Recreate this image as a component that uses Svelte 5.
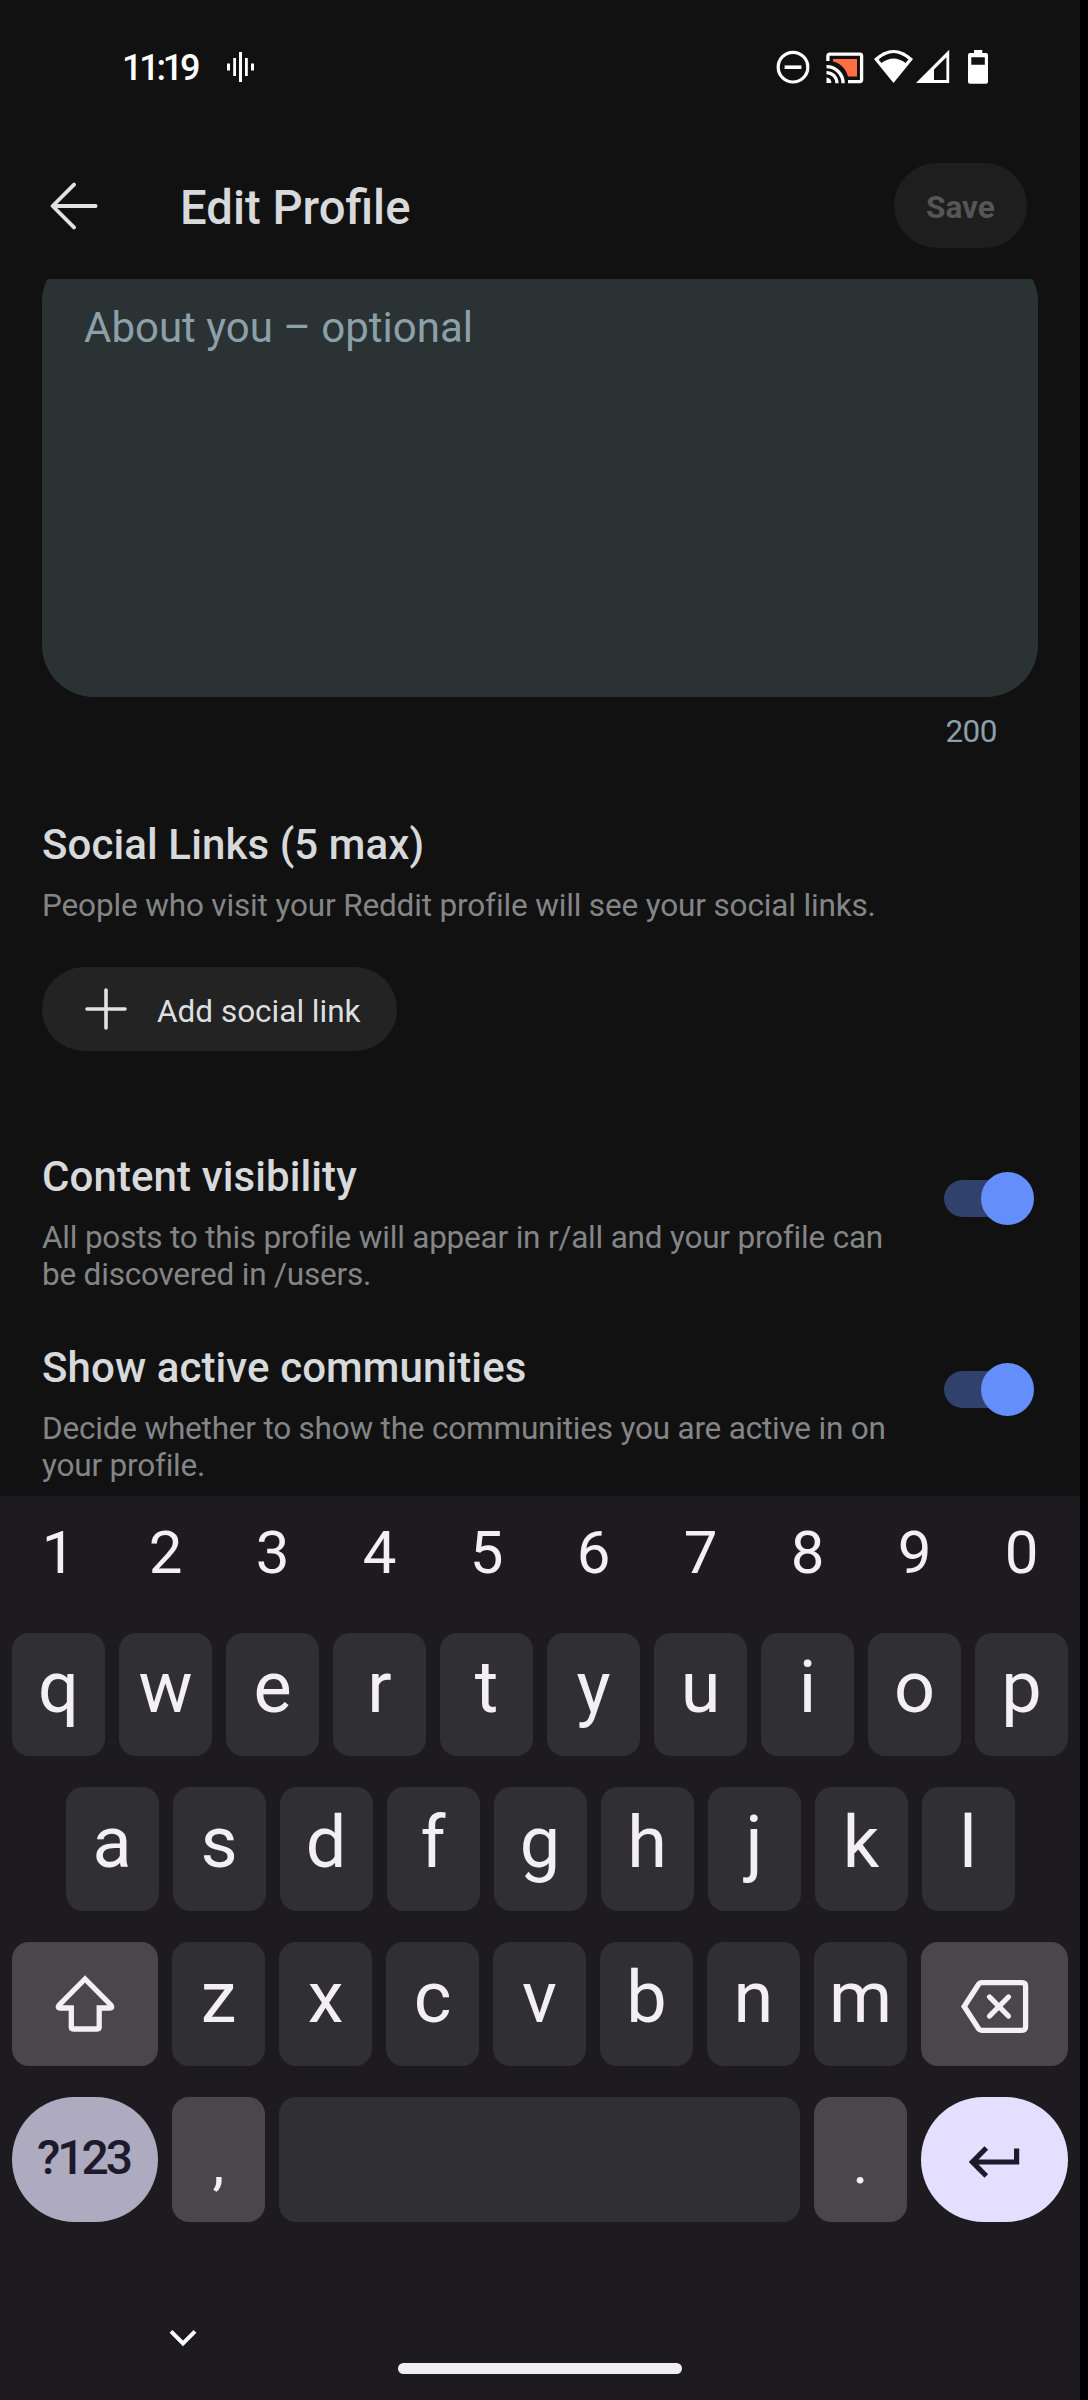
<script>
  let about = $state('');
  let settings = $state([
    {
      title: 'Content visibility',
      text: 'All posts to this profile will appear in r/all and your profile can be discovered in /users.',
      on: true
    },
    {
      title: 'Show active communities',
      text: 'Decide whether to show the communities you are active in on your profile.',
      on: true
    }
  ]);
  const digits = [...'1234567890'];
  const top = [...'qwertyuiop'];
  const home = [...'asdfghjkl'];
  const low = [...'zxcvbnm'];
</script>

<div class="phone">
  <div class="status">
    <span class="clock">11:19</span>
    <svg class="wave" width="30" height="32" viewBox="0 0 30 32" fill="#fff">
      <rect x="1" y="12.5" width="3" height="7" /><rect x="7.2" y="7" width="2.8" height="18" />
      <rect x="13" y="1" width="3" height="30" /><rect x="19" y="7" width="2.8" height="18" />
      <rect x="25" y="12.5" width="3" height="7" />
    </svg>
    <div class="indicators">
      <svg class="dnd" width="34" height="36" viewBox="0 0 34 36" fill="none" stroke="#fff">
        <circle cx="17" cy="18.2" r="14.8" stroke-width="3.2" />
        <path d="M8.6 18.2H25.4" stroke-width="3.6" />
      </svg>
      <svg class="cast" width="38" height="36" viewBox="0 0 38 36" fill="none" stroke="#fff" stroke-width="3.3">
        <path d="M7 10H31V27.6H22C20.5 20.5 14.5 13.6 7 12.4Z" fill="#ff6f43" stroke="none" />
        <path d="M1.9 12V7Q1.9 5.2 3.7 5.2H33.8Q35.6 5.2 35.6 7V30.8Q35.6 32.6 33.8 32.6H22" />
        <path d="M.5 17.6A16.6 16.6 0 0 1 17.1 34.2M.5 23.6A10.4 10.4 0 0 1 10.9 34.2" />
        <path d="M.5 28.6A5 5 0 0 1 5.3 34H.5Z" fill="#fff" stroke="none" />
      </svg>
      <svg class="wifi" width="39" height="36" viewBox="0 0 39 36">
        <path d="M0 10Q19.5 -8 39 10L19.5 34Z" fill="#fff" />
        <path d="M4.6 10.6Q19.5 -2.6 34.4 10.6L31.6 14Q19.5 4.8 7.4 14Z" fill="#111" />
      </svg>
      <svg class="signal" width="34" height="36" viewBox="0 0 34 36">
        <path fill="#fff" fill-rule="evenodd" d="M0 34L33.2 .8V34ZM18 31H30.4V8.2L18 20.6Z" />
      </svg>
      <svg class="battery" width="20" height="36" viewBox="0 0 20 36">
        <path fill="#fff" fill-rule="evenodd" d="M6 1H14.3V4H18Q20 4 20 6V32.7Q20 34.7 18 34.7H2Q0 34.7 0 32.7V6Q0 4 2 4H6ZM3.3 8.2V15.8H16.8V8.2Z" />
      </svg>
    </div>
  </div>

  <header class="bar">
    <svg class="back" width="50" height="48" viewBox="0 0 50 48" fill="none" stroke="#dfe3e5" stroke-width="3.8" stroke-linecap="round" stroke-linejoin="round">
      <path d="M46.6 24H4M25 2.6L3.6 24L25 45.4" />
    </svg>
    <h1>Edit Profile</h1>
    <button class="save" disabled>Save</button>
  </header>

  <main>
    <div class="about">{about || 'About you – optional'}</div>
    <div class="count">{200 - about.length}</div>

    <h2>Social Links (5 max)</h2>
    <p class="hint">People who visit your Reddit profile will see your social links.</p>
    <button class="add">
      <svg width="42" height="42" viewBox="0 0 42 42" stroke="#dfe3e5" stroke-width="3.6" stroke-linecap="round">
        <path d="M21 2V40M2 21H40" />
      </svg>
      <span>Add social link</span>
    </button>

    <div class="settings">
      {#each settings as s}
        <section class="setting">
          <div class="copy">
            <h2>{s.title}</h2>
            <p>{s.text}</p>
          </div>
          <button class="switch" class:on={s.on} aria-label={s.title} onclick={() => (s.on = !s.on)}>
            <span class="thumb"></span>
          </button>
        </section>
      {/each}
    </div>
  </main>

  <div class="keyboard">
    <div class="row digits">
      {#each digits as d}<span class="digit">{d}</span>{/each}
    </div>
    <div class="row first">
      {#each top as k}<span class="key">{k}</span>{/each}
    </div>
    <div class="row">
      {#each home as k}<span class="key">{k}</span>{/each}
    </div>
    <div class="row">
      <span class="key wide tone">
        <svg width="60" height="58" viewBox="0 0 60 58" fill="none" stroke="#f3eff5" stroke-width="5.3">
          <path d="M30 4L4 30.2Q2 33 5 33H16.3V52Q16.3 54 18.3 54H42.2Q44.2 54 44.2 52V33H55Q58 33 56 30.2Z" />
        </svg>
      </span>
      {#each low as k}<span class="key">{k}</span>{/each}
      <span class="key wide tone end">
        <svg class="erase" width="68" height="53" viewBox="0 0 68 53" fill="none" stroke="#f3eff5" stroke-width="5.3">
          <path d="M3.2 26.5L17.6 4.2Q18.6 2.7 20.5 2.7H61Q64.6 2.7 64.6 6.2V46.8Q64.6 50.3 61 50.3H20.5Q18.6 50.3 17.6 48.8Z" />
          <path d="M28.6 17L47.4 36M47.4 17L28.6 36" stroke-linecap="round" />
        </svg>
      </span>
    </div>
    <div class="row last">
      <span class="key wide symbols">?123</span>
      <span class="key tone mark">,</span>
      <span class="key space"></span>
      <span class="key tone mark">.</span>
      <span class="key wide enter end">
        <svg width="51" height="32" viewBox="0 0 51 32" fill="none" stroke="#1d1a2b" stroke-width="5.2">
          <path d="M47.6 2.6V16H4M17.3 2L3.5 16L17.3 30" />
        </svg>
      </span>
    </div>
    <div class="nav">
      <svg class="hide" width="28" height="18" viewBox="0 0 28 18" fill="none" stroke="#fff" stroke-width="4">
        <path d="M2 2.4L14 14.4L26 2.4" />
      </svg>
      <span class="pill"></span>
    </div>
  </div>
</div>

<style>
  :global(body) { background: #000; }
  .phone {
    width: 1080px;
    height: 2400px;
    display: flex;
    flex-direction: column;
    overflow: hidden;
    background: #111;
    color: #d7d9db;
    font-family: Roboto, "Liberation Sans", sans-serif;
  }
  h1, h2, p { margin: 0; }
  button { border: 0; padding: 0; font: inherit; color: inherit; }
  svg { display: block; flex: none; }

  .status { flex: none; height: 132px; box-sizing: border-box; padding: 2px 92px 0 122px; display: flex; align-items: center; color: #fff; }
  .clock { width: 104px; padding-top: 1px; font-size: 36px; font-weight: 500; letter-spacing: -3.2px; line-height: 42px; }
  .indicators { margin-left: auto; display: flex; align-items: center; }
  .cast { margin-left: 16px; }
  .wifi { margin-left: 10px; }
  .signal { margin-left: 3px; }
  .battery { margin-left: 18px; }

  .bar { flex: none; height: 147px; box-sizing: border-box; padding: 0 53px 0 49px; display: flex; align-items: center; }
  h1 { flex: 1; padding: 4px 0 0 81px; font-size: 47.25px; font-weight: 500; line-height: 56px; }
  .save { width: 133px; height: 85px; padding-top: 3px; border-radius: 43px; background: #1e1e1e; color: #565656; font-size: 31.5px; font-weight: 700; }

  main { flex: none; height: 1217px; box-sizing: border-box; padding: 0 42px; overflow: hidden; }
  .about { height: 447px; margin-top: -29px; box-sizing: border-box; padding: 53px 42px; border-radius: 52px; background: #2a3233; color: #8ca0a9; font-size: 42px; line-height: 50px; }
  .count { margin: 16px 41px 0; text-align: right; color: #8ca0a9; font-size: 31.5px; letter-spacing: -0.5px; line-height: 37px; }
  h2 { font-size: 42px; font-weight: 500; letter-spacing: 0.1px; line-height: 49px; }
  .count + h2 { margin-top: 70px; }
  p { margin-top: 18px; font-size: 31.5px; letter-spacing: -0.2px; line-height: 37px; color: #848586; }
  .hint { letter-spacing: -0.15px; }
  .add { margin-top: 43px; width: 355px; height: 84px; box-sizing: border-box; padding: 0 0 0 43px; display: flex; align-items: center; gap: 30px; border-radius: 42px; background: #232323; color: #dcdfe0; font-size: 31.5px; }
  .add span { padding-top: 4px; }
  .settings { margin-top: 102px; }
  .setting { height: 191px; display: flex; justify-content: space-between; }
  .copy { width: 860px; margin-top: -1px; }
  .switch { margin: 19px 4px 0 0; width: 90px; height: 53px; display: flex; align-items: center; background: none; }
  .switch::before { content: ""; width: 82px; height: 37px; border-radius: 19px; background: #3a3c40; }
  .switch.on::before { background: #30416c; }
  .thumb { flex: none; width: 53px; height: 53px; margin-left: -82px; border-radius: 50%; background: #999; }
  .switch.on .thumb { margin-left: -45px; background: #648efc; }

  .keyboard { flex: none; height: 904px; background: #1d1b20; color: #f3eff5; }
  .row { display: flex; justify-content: center; gap: 14px; height: 124px; margin-bottom: 31px; }
  .row.digits { height: 137px; margin: 0; }
  .row.first { height: 123px; }
  .row.last { height: 125px; margin: 0; }
  .digit { width: 93px; padding-top: 22px; text-align: center; font-size: 60px; line-height: 70px; }
  .key { width: 93px; box-sizing: border-box; padding-bottom: 13px; display: flex; align-items: center; justify-content: center; border-radius: 17px; background: #302f34; font-size: 72px; line-height: 84px; }
  .wide { width: 146px; padding: 0; }
  .end { width: 147px; }
  .tone { background: #49464c; }
  .erase { margin-top: 5px; }
  .symbols { padding: 0 3px 4px 0; border-radius: 63px; background: #aeaabf; color: #1d1a2b; font-size: 48px; font-weight: 500; letter-spacing: -3px; }
  .mark { padding: 7px 0 0; font-size: 60px; }
  .space { width: 521px; }
  .enter { padding-top: 5px; border-radius: 63px; background: #e4deff; }
  .nav { height: 178px; display: flex; align-items: flex-start; padding-left: 169px; }
  .hide { margin-top: 107px; }
  .pill { width: 284px; height: 11px; margin: 141px 0 0 201px; border-radius: 6px; background: #efefef; }
</style>
